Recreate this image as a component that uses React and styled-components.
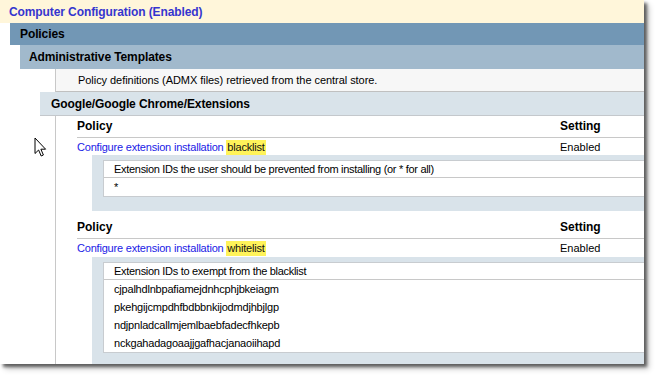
import React from "react";
import styled, { createGlobalStyle } from "styled-components";

const GlobalStyle = createGlobalStyle`
  html, body {
    margin: 0;
    padding: 0;
    background: #ffffff;
  }
  body {
    font-family: "Liberation Sans", Arial, sans-serif;
    font-size: 11px;
    color: #000;
  }
`;

const Stage = styled.div`
  position: relative;
  width: 659px;
  height: 380px;
  overflow: hidden;
`;

const Panel = styled.div`
  width: 644px;
  height: 364px;
  overflow: hidden;
  background: #fff;
  box-shadow: 3px 3px 3px rgba(0, 0, 0, 0.55), 5px 5px 6px rgba(0, 0, 0, 0.2);
`;

const HeadRow = styled.div`
  margin-left: ${(p) => p.$indent || 0}px;
  height: ${(p) => p.$h || 22}px;
  display: flex;
  align-items: center;
  padding-left: ${(p) => p.$pad || 10}px;
  background: ${(p) => p.$bg};
  color: ${(p) => p.$color || "#000"};
  font-weight: bold;
  font-size: 12px;
  letter-spacing: -0.1px;
  border-bottom: ${(p) => (p.$line ? "1px solid #c4c8cc" : "none")};
  box-sizing: border-box;
`;

const InfoRow = styled.div`
  margin-left: 55px;
  height: 23px;
  display: flex;
  align-items: center;
  padding-left: 22px;
  background: #f7f7f7;
  border-left: 1px solid #c8c8c8;
  border-bottom: 1px solid #c0c0c0;
  box-sizing: border-box;
  letter-spacing: -0.05px;
`;

const Body = styled.div`
  margin-left: 55px;
  border-left: 1px solid #c8c8c8;
  padding-left: 21px;
`;

const PolicyBlock = styled.div`
  margin-bottom: ${(p) => p.$gap || 0}px;
`;

const TableHead = styled.div`
  display: grid;
  grid-template-columns: 1fr 84px;
  height: 21px;
  padding-bottom: 1px;
  box-sizing: border-box;
  align-items: center;
  font-weight: bold;
  font-size: 12px;
  border-bottom: 1px solid #c8c8c8;
  height: 22px;
`;

const TableRow = styled.div`
  display: grid;
  grid-template-columns: 1fr 84px;
  height: ${(p) => p.$h || 17}px;
  align-items: center;
`;

const Link = styled.span`
  color: #1a1ae6;
  letter-spacing: -0.2px;
`;

const Mark = styled.span`
  background: #fff35a;
  color: #111;
  padding: 1px 1px 2px;
`;

const ValueBox = styled.div`
  margin-left: 15px;
  background: #d9e3ea;
  padding: 5px 0 ${(p) => p.$bottom || 14}px 11px;
`;

const ValueTable = styled.div`
  background: #fff;
  border-left: 1px solid #c8ccd0;
  border-top: 1px solid #c8ccd0;
  border-bottom: 1px solid #c8ccd0;
`;

const ValueHead = styled.div`
  height: 16px;
  display: flex;
  align-items: center;
  padding-left: 10px;
  border-bottom: 1px solid #c8c8c8;
  letter-spacing: -0.3px;
`;

const ValueItem = styled.div`
  height: ${(p) => p.$h || 18}px;
  display: flex;
  align-items: center;
  padding-left: 10px;
  letter-spacing: -0.2px;
`;

const Cursor = styled.svg`
  position: absolute;
  left: 34px;
  top: 137px;
`;

const ids = [
  "cjpalhdlnbpafiamejdnhcphjbkeiagm",
  "pkehgijcmpdhfbdbbnkijodmdjhbjlgp",
  "ndjpnladcallmjemlbaebfadecfhkepb",
  "nckgahadagoaajjgafhacjanaoiihapd",
];

export default function App() {
  return (
    <Stage>
      <GlobalStyle />
      <Panel>
        <HeadRow $bg="#fff6da" $color="#3535cf" $h={23} $pad={9}>
          Computer Configuration (Enabled)
        </HeadRow>
        <HeadRow $indent={10} $bg="#7297b5" $pad={10}>
          Policies
        </HeadRow>
        <HeadRow $indent={20} $bg="#a1b9cc" $h={24} $pad={9}>
          Administrative Templates
        </HeadRow>
        <InfoRow>Policy definitions (ADMX files) retrieved from the central store.</InfoRow>
        <HeadRow $indent={40} $bg="#d9e3ea" $h={24} $pad={11} $line>
          Google/Google Chrome/Extensions
        </HeadRow>
        <Body>
          <PolicyBlock $gap={6}>
            <TableHead>
              <span>Policy</span>
              <span>Setting</span>
            </TableHead>
            <TableRow>
              <Link>
                Configure extension installation <Mark>blacklist</Mark>
              </Link>
              <span>Enabled</span>
            </TableRow>
            <ValueBox>
              <ValueTable>
                <ValueHead>Extension IDs the user should be prevented from installing (or * for all)</ValueHead>
                <ValueItem>*</ValueItem>
              </ValueTable>
            </ValueBox>
          </PolicyBlock>
          <PolicyBlock>
            <TableHead>
              <span>Policy</span>
              <span>Setting</span>
            </TableHead>
            <TableRow $h={18}>
              <Link>
                Configure extension installation <Mark>whitelist</Mark>
              </Link>
              <span>Enabled</span>
            </TableRow>
            <ValueBox>
              <ValueTable>
                <ValueHead>Extension IDs to exempt from the blacklist</ValueHead>
                {ids.map((id) => (
                  <ValueItem key={id}>{id}</ValueItem>
                ))}
              </ValueTable>
            </ValueBox>
          </PolicyBlock>
        </Body>
      </Panel>
      <Cursor width="13" height="21" viewBox="0 0 13 21">
        <path
          d="M1 1 L1 16.5 L4.6 13 L7.2 19 L9.4 18 L6.9 12.2 L11.6 12.2 Z"
          fill="#fff"
          stroke="#000"
          strokeWidth="1"
          strokeLinejoin="miter"
        />
      </Cursor>
    </Stage>
  );
}
